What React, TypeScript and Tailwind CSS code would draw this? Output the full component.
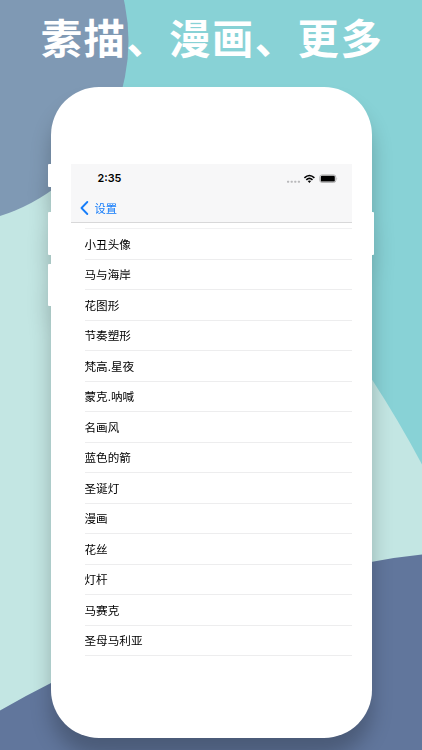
const styles = [
  "小丑头像",
  "马与海岸",
  "花图形",
  "节奏塑形",
  "梵高.星夜",
  "蒙克.呐喊",
  "名画风",
  "蓝色的箭",
  "圣诞灯",
  "漫画",
  "花丝",
  "灯杆",
  "马赛克",
  "圣母马利亚",
];

function Backdrop() {
  return (
    <svg className="absolute inset-0" width="422" height="750" viewBox="0 0 422 750">
      <rect width="422" height="750" fill="#c3e6e3" />
      <path d="M90 0H422V464.5Q399 421 371 378L220 180L90 120Z" fill="#88d2d6" />
      <circle cx="-55" cy="41" r="183.5" fill="#7f99b4" />
      <path d="M0 710.5Q25 696 51 683Q205 585 371 562Q397 557 422 554.5V750H0Z" fill="#61769c" />
    </svg>
  );
}

function StatusBar() {
  return (
    <div className="flex h-[30.5px] items-center justify-between pl-[26.5px] pr-[14px]">
      <span className="pt-[2px] font-['Inter'] text-[10.8px] font-semibold leading-none text-black">2:35</span>
      <svg width="52" height="12" viewBox="0 0 52 12">
        <g fill="#b9b9bb">
          <rect x="1" y="7.7" width="2.2" height="2" rx=".6" />
          <rect x="4.6" y="7.7" width="2.2" height="2" rx=".6" />
          <rect x="8.2" y="7.7" width="2.2" height="2" rx=".6" />
          <rect x="11.8" y="7.7" width="2.2" height="2" rx=".6" />
        </g>
        <g fill="none" stroke="#000" strokeWidth="1.6">
          <path d="M18.4 4.8Q23.4 .2 28.4 4.8" />
          <path d="M20.3 6.9Q23.4 4 26.5 6.9" />
        </g>
        <path d="M21.7 8.1Q23.4 6.8 25.1 8.1L23.4 9.9Z" />
        <rect x="33.8" y="1.9" width="16" height="7.6" rx="2.2" fill="none" stroke="#a3a3a5" strokeWidth=".8" />
        <rect x="34.8" y="2.8" width="14" height="5.8" rx="1.2" />
        <path d="M50.6 4.3Q51.8 5.7 50.6 7.1Z" fill="#a3a3a5" />
      </svg>
    </div>
  );
}

function NavBar() {
  return (
    <div className="flex h-[28px] items-center pl-[8.5px] text-[#167dfa]">
      <svg width="9" height="14" viewBox="0 0 9 14" fill="none" stroke="currentColor" strokeWidth="1.8">
        <path d="M7.3 1L1.5 7L7.3 13" strokeLinecap="round" strokeLinejoin="round" />
      </svg>
      <span className="ml-[6px] pt-[1px] text-[11.3px] leading-none">设置</span>
    </div>
  );
}

export default function App() {
  return (
    <main className="relative h-[750px] w-[422px] overflow-hidden font-['Noto_Sans_CJK_SC',sans-serif]">
      <Backdrop />
      <div className="relative flex flex-col items-center">
        <h1 className="flex h-[87px] items-start whitespace-nowrap pl-[2px] pt-[6px] text-[41.3px] font-bold leading-[60px] tracking-[1.5px] text-white">
          素描、漫画、更多
        </h1>
        <div className="flex h-[650.5px] items-stretch drop-shadow-[0_18px_10px_rgba(0,0,0,0.23)]">
          {/* mute switch and volume keys */}
          <div className="flex w-[2.5px] flex-col pt-[77px]">
            <div className="h-[23px] rounded-l-[1px] bg-white" />
            <div className="mt-[25px] h-[43px] rounded-l-[1px] bg-white" />
            <div className="mt-[9px] h-[42px] rounded-l-[1px] bg-white" />
          </div>
          <div className="flex w-[321px] flex-col rounded-[48px] bg-white pl-[20.5px] pr-5 pt-[76.5px]">
            <header className="flex h-[59.5px] flex-col border-b border-[#d8d8d9] bg-[#f7f7f8]">
              <StatusBar />
              <NavBar />
            </header>
            <ul className="ml-[13.5px] mt-[5px] flex flex-col border-t border-[#f1f1f2]">
              {styles.map((name) => (
                <li
                  key={name}
                  className="flex h-[30.5px] items-center border-b border-[#ededee] pt-[2px] text-[11.6px] leading-none text-black"
                >
                  {name}
                </li>
              ))}
            </ul>
          </div>
          {/* power key */}
          <div className="flex w-[2.5px] flex-col pt-[125px]">
            <div className="h-[43px] rounded-r-[1px] bg-white" />
          </div>
        </div>
      </div>
    </main>
  );
}
